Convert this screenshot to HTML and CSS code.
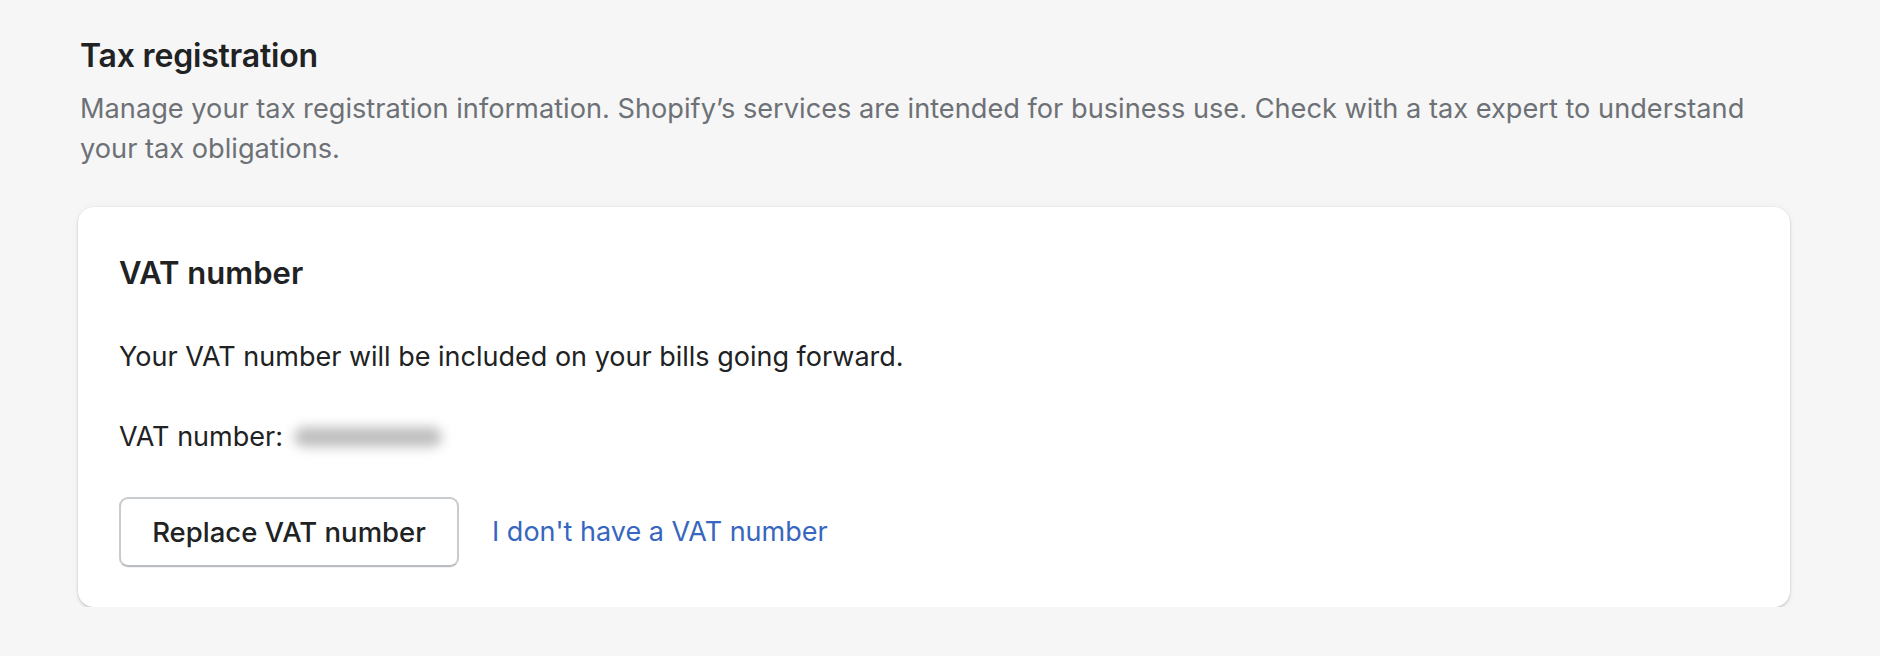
FILE: index.html
```html
<!DOCTYPE html>
<html lang="en">
<head>
<meta charset="utf-8">
<title>Tax registration</title>
<link rel="stylesheet" href="styles.css">
</head>
<body>
<main class="page">
  <section class="section">
    <header class="section-head">
      <h2 class="section-title">Tax registration</h2>
      <p class="section-desc">Manage your tax registration information. Shopify’s services are intended for business use. Check with a tax expert to understand your tax obligations.</p>
    </header>
    <div class="card">
      <h3 class="card-title">VAT number</h3>
      <p class="card-text">Your VAT number will be included on your bills going forward.</p>
      <p class="card-text vat-line">VAT number:<span class="redacted" aria-hidden="true"></span></p>
      <div class="actions">
        <button class="btn" type="button">Replace VAT number</button>
        <a class="link" href="#">I don't have a VAT number</a>
      </div>
    </div>
  </section>
</main>
</body>
</html>
```

FILE: styles.css
```css
* { box-sizing: border-box; }
html, body {
  margin: 0;
  padding: 0;
  background: #f6f6f7;
}
body {
  font-family: Inter, "Noto Sans", "Liberation Sans", sans-serif;
  color: #202223;
  -webkit-font-smoothing: antialiased;
}
.page {
  padding: 36px 90px 0 78px;
}
.section-head {
  padding-left: 2px;
}
.section-title {
  margin: 0;
  font-size: 32px;
  line-height: 40px;
  font-weight: 600;
  letter-spacing: -0.2px;
  color: #202223;
}
.section-desc {
  margin: 13px 0 0;
  font-size: 27.2px;
  line-height: 40px;
  font-weight: 400;
  color: #6d7175;
  max-width: 1690px;
}
.card {
  margin-top: 38px;
  background: #ffffff;
  border-radius: 16px;
  padding: 40px 40px 40px 41px;
  box-shadow: 0 0 0 1px rgba(0, 0, 0, 0.025), 0 0 8px rgba(23, 24, 24, 0.04), 0 2px 3px rgba(0, 0, 0, 0.14);
}
.card-title {
  margin: 0;
  font-size: 31px;
  line-height: 52px;
  font-weight: 600;
  color: #202223;
}
.card-text {
  margin: 38px 0 0;
  font-size: 27px;
  line-height: 40px;
  color: #202223;
}
.vat-line {
  margin-top: 40px;
  display: flex;
  align-items: center;
}
.redacted {
  display: inline-block;
  width: 148px;
  height: 20px;
  margin-left: 11px;
  background: #bfbfbf;
  border-radius: 10px;
  filter: blur(6px);
}
.actions {
  margin-top: 40px;
  display: flex;
  align-items: center;
  gap: 33px;
}
.btn {
  height: 70px;
  width: 340px;
  padding: 0;
  background: #ffffff;
  border: 2px solid #c9cccf;
  border-bottom-color: #b9bdc1;
  border-radius: 9px;
  font-family: Inter, "Noto Sans", "Liberation Sans", sans-serif;
  font-size: 27.5px;
  font-weight: 500;
  color: #202223;
  box-shadow: 0 1px 0 rgba(0, 0, 0, 0.05);
}
.link {
  font-size: 27px;
  line-height: 40px;
  color: #3766c0;
  text-decoration: none;
}
```
